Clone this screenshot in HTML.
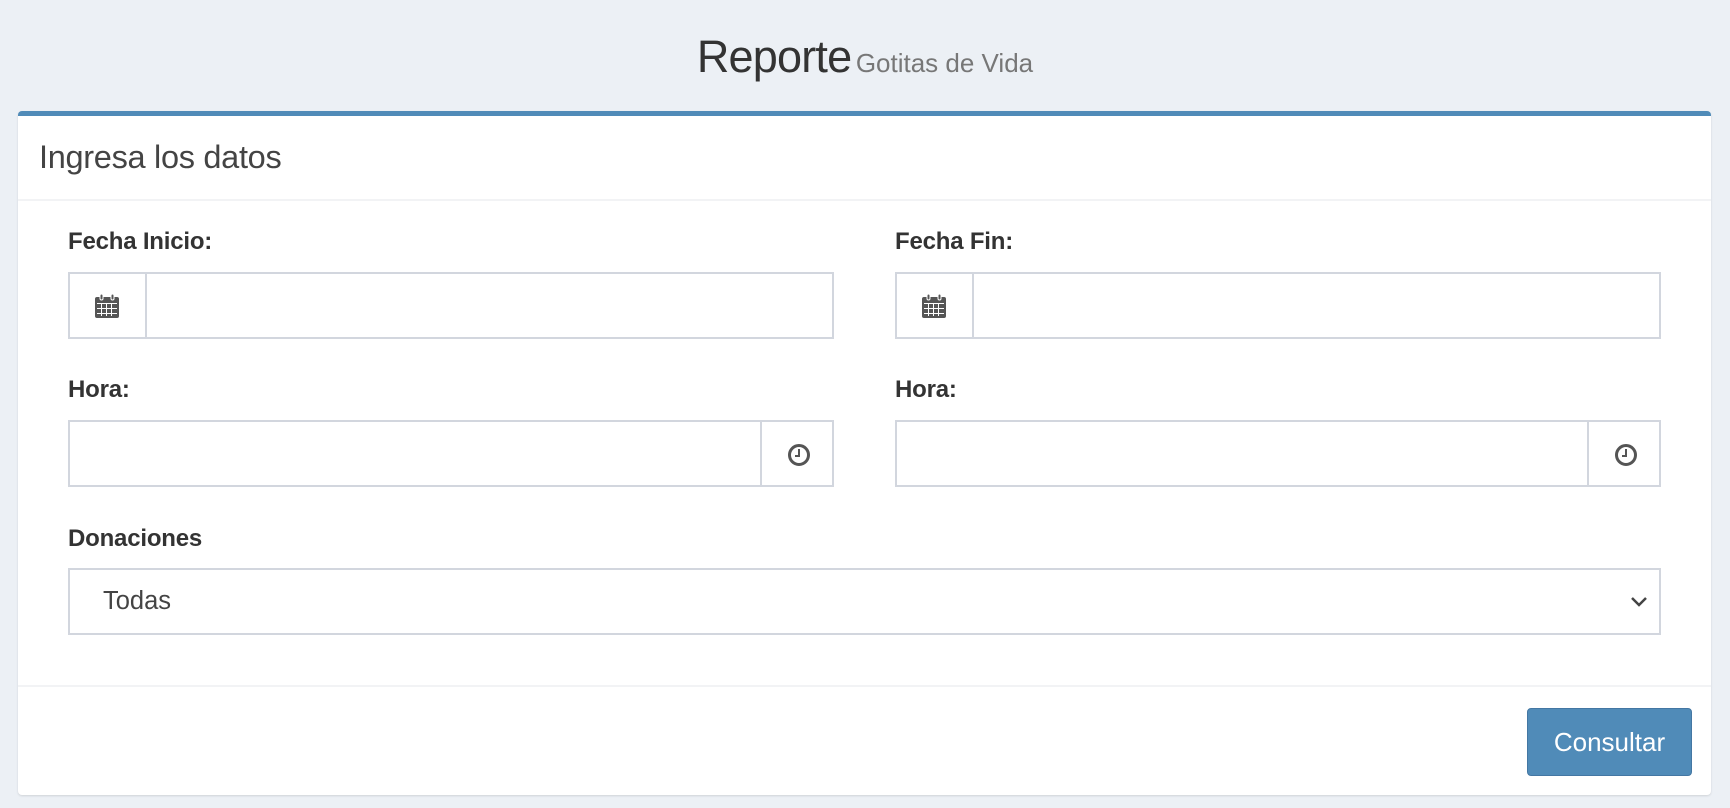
<!DOCTYPE html>
<html><head><meta charset="utf-8"><style>
*{box-sizing:border-box;margin:0;padding:0}
body{width:1730px;height:808px;background:#ecf0f5;font-family:"Liberation Sans",sans-serif;position:relative;overflow:hidden;color:#333}
.abs{position:absolute}
.title{left:0;width:1730px;top:31px;text-align:center;white-space:nowrap}
.title b{font-weight:normal;font-size:45px;color:#333;letter-spacing:-0.8px}
.title span{font-size:26px;color:#777}
.card{left:18px;top:111px;width:1693px;height:684px;background:#fff;border-top:5px solid #508bb8;border-radius:4px;box-shadow:0 1px 2px rgba(0,0,0,.12)}
.hdr{left:39px;top:139px;font-size:32.5px;color:#444;letter-spacing:-0.3px}
.line{left:18px;width:1693px;height:2px;background:#f2f3f5}
.lbl{font-weight:bold;font-size:24px;color:#333;letter-spacing:-0.2px}
.box{border:2px solid #d2d6de;background:#fff}
.sep{position:absolute;top:0;bottom:0;width:2px;background:#d2d6de}
.btn{left:1527px;top:708px;width:165px;height:68px;background:#508bb8;border:1px solid #4477a3;border-radius:4px;color:#fff;font-size:26px;text-align:center;line-height:66px}
</style></head><body>
<div class="abs title"><b>Reporte</b> <span>Gotitas de Vida</span></div>
<div class="abs card"></div>
<div class="abs hdr">Ingresa los datos</div>
<div class="abs line" style="top:199px"></div>
<div class="abs line" style="top:685px"></div>

<div class="abs lbl" style="left:68px;top:228px">Fecha Inicio:</div>
<div class="abs lbl" style="left:895px;top:228px">Fecha Fin:</div>
<div class="abs box" style="left:68px;top:272px;width:766px;height:67px"><div class="sep" style="left:75px"></div>
<svg class="abs" style="left:24px;top:19px" width="26" height="26" viewBox="0 0 26 26"><rect x="1" y="4" width="24" height="21" rx="2" fill="#555"/><rect x="6" y="1" width="3" height="6" rx="1.5" fill="#555" stroke="#fff" stroke-width="1"/><rect x="17" y="1" width="3" height="6" rx="1.5" fill="#555" stroke="#fff" stroke-width="1"/><g fill="#fff"><rect x="3" y="10" width="20" height="1"/><rect x="3" y="15" width="20" height="1"/><rect x="3" y="20" width="20" height="1"/><rect x="7" y="10" width="1" height="13"/><rect x="12" y="10" width="1" height="13"/><rect x="17" y="10" width="1" height="13"/></g></svg></div>
<div class="abs box" style="left:895px;top:272px;width:766px;height:67px"><div class="sep" style="left:75px"></div>
<svg class="abs" style="left:24px;top:19px" width="26" height="26" viewBox="0 0 26 26"><rect x="1" y="4" width="24" height="21" rx="2" fill="#555"/><rect x="6" y="1" width="3" height="6" rx="1.5" fill="#555" stroke="#fff" stroke-width="1"/><rect x="17" y="1" width="3" height="6" rx="1.5" fill="#555" stroke="#fff" stroke-width="1"/><g fill="#fff"><rect x="3" y="10" width="20" height="1"/><rect x="3" y="15" width="20" height="1"/><rect x="3" y="20" width="20" height="1"/><rect x="7" y="10" width="1" height="13"/><rect x="12" y="10" width="1" height="13"/><rect x="17" y="10" width="1" height="13"/></g></svg></div>

<div class="abs lbl" style="left:68px;top:376px">Hora:</div>
<div class="abs lbl" style="left:895px;top:376px">Hora:</div>
<div class="abs box" style="left:68px;top:420px;width:766px;height:67px"><div class="sep" style="left:690px"></div>
<svg class="abs" style="left:717px;top:21px" width="24" height="24" viewBox="0 0 24 24"><circle cx="12" cy="12" r="9.5" fill="none" stroke="#555" stroke-width="3"/><path d="M12 6v7h-4" fill="none" stroke="#555" stroke-width="2"/></svg></div>
<div class="abs box" style="left:895px;top:420px;width:766px;height:67px"><div class="sep" style="left:690px"></div>
<svg class="abs" style="left:717px;top:21px" width="24" height="24" viewBox="0 0 24 24"><circle cx="12" cy="12" r="9.5" fill="none" stroke="#555" stroke-width="3"/><path d="M12 6v7h-4" fill="none" stroke="#555" stroke-width="2"/></svg></div>

<div class="abs lbl" style="left:68px;top:525px">Donaciones</div>
<div class="abs box" style="left:68px;top:568px;width:1593px;height:67px">
<div class="abs" style="left:33px;top:17px;font-size:25.5px;color:#444">Todas</div>
<svg class="abs" style="left:1560px;top:26px" width="18" height="12" viewBox="0 0 18 12"><path d="M2 2l7 7 7-7" fill="none" stroke="#444" stroke-width="2.5"/></svg></div>

<div class="abs btn">Consultar</div>
</body></html>
